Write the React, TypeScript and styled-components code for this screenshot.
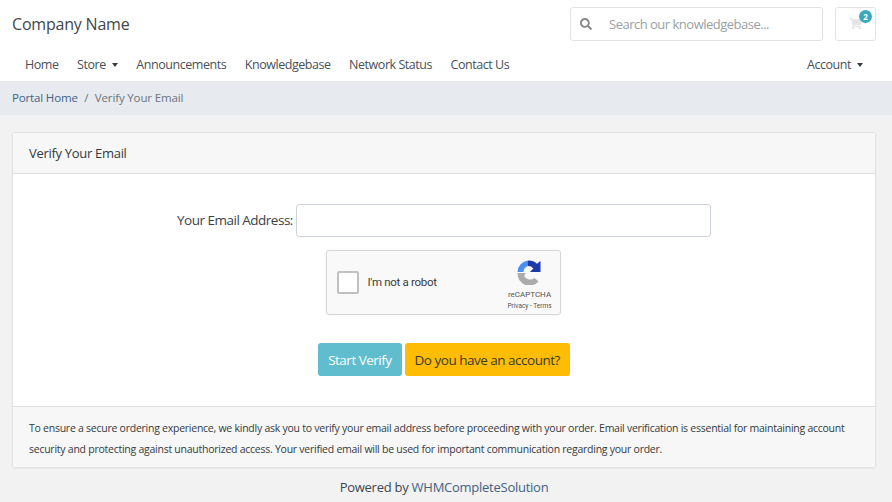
import styled, { createGlobalStyle } from 'styled-components'
import { FaSearch, FaShoppingCart } from 'react-icons/fa'

const GlobalStyle = createGlobalStyle`
  html, body {
    margin: 0;
    background: #f2f2f2;
    font-family: "Open Sans", "Liberation Sans", sans-serif;
    color: #343a40;
  }
  * {
    box-sizing: border-box;
  }
`

const Header = styled.header`
  background: #fff;
  padding: 7px 16px 0 12px;
  height: 81px;
`

const TopRow = styled.div`
  display: flex;
  align-items: center;
  height: 33px;
`

const Brand = styled.a`
  font-size: 16px;
  letter-spacing: -0.2px;
  line-height: 33px;
  padding-top: 1px;
  color: #3f464c;
  margin-right: auto;
`

const SearchBox = styled.div`
  width: 253px;
  height: 34px;
  display: flex;
  align-items: center;
  border: 1px solid #e0e3e6;
  border-radius: 3px;
  padding-left: 9px;
  color: #888;
  font-size: 13px;
  letter-spacing: -0.5px;
`

const SearchText = styled.span`
  margin-left: 17px;
  color: #9a9fa4;
`

const CartButton = styled.div`
  position: relative;
  width: 41px;
  height: 34px;
  margin-left: 12px;
  border: 1px solid #e0e3e6;
  border-radius: 3px;
  display: flex;
  align-items: center;
  justify-content: center;
  color: #e3e5e6;
  font-size: 13px;
`

const CartBadge = styled.span`
  position: absolute;
  top: 2px;
  right: 3px;
  width: 13px;
  height: 13px;
  border-radius: 50%;
  background: #3aa9bb;
  color: #fff;
  font-size: 8px;
  font-weight: 700;
  line-height: 13px;
  text-align: center;
`

const Nav = styled.nav`
  display: flex;
  align-items: center;
  height: 41px;
  gap: 18.6px;
  padding: 8px 13px 0 13px;
  font-size: 12.5px;
  letter-spacing: -0.46px;
  color: #4a5057;
`

const NavItem = styled.a<{ $right?: boolean }>`
  display: flex;
  align-items: center;
  ${(p) => p.$right && 'margin-left: auto;'}
`

const Caret = styled.span`
  margin-left: 6px;
  border-top: 4px solid #343a40;
  border-left: 3.5px solid transparent;
  border-right: 3.5px solid transparent;
`

const Breadcrumb = styled.div`
  height: 34px;
  background: #e7eaee;
  padding: 0 0 1px 12px;
  display: flex;
  align-items: center;
  font-size: 11.5px;
  letter-spacing: -0.15px;
  color: #6c757d;
`

const CrumbLink = styled.a`
  color: #3f6286;
`

const CrumbSep = styled.span`
  margin: 0 6.5px;
`

const Main = styled.main`
  padding: 17px 16px 0 12px;
`

const Card = styled.section`
  background: #fff;
  border: 1px solid #e1e1e1;
  border-radius: 3px;
  box-shadow: 0 1px 2px rgba(0, 0, 0, 0.05);
`

const CardHeader = styled.div`
  height: 41px;
  background: #f7f7f7;
  border-bottom: 1px solid #dfdfdf;
  padding-left: 16px;
  display: flex;
  align-items: center;
  font-size: 13px;
  letter-spacing: -0.3px;
  color: #343a40;
`

const CardBody = styled.div`
  height: 232px;
  padding-top: 30px;
  display: flex;
  flex-direction: column;
  align-items: center;
`

const FormRow = styled.div`
  display: flex;
  align-items: center;
  align-self: flex-start;
  padding-left: 164px;
`

const Label = styled.label`
  font-size: 13.5px;
  letter-spacing: -0.5px;
  padding-bottom: 2px;
  color: #3b4046;
  margin-right: 3px;
`

const TextInput = styled.input`
  width: 415px;
  height: 33px;
  border: 1px solid #ced4da;
  border-radius: 3px;
  background: #fff;
`

const Captcha = styled.div`
  width: 235px;
  height: 65px;
  margin-top: 13px;
  margin-left: -2px;
  background: #f9f9f9;
  border: 1px solid #d6d6d6;
  border-radius: 3px;
  box-shadow: 0 0 3px rgba(0, 0, 0, 0.06);
  display: flex;
  align-items: center;
  padding-left: 10px;
  font-family: Roboto, "Liberation Sans", sans-serif;
`

const CaptchaBox = styled.div`
  width: 22px;
  height: 23px;
  background: #fff;
  border: 2px solid #c1c1c1;
  border-radius: 2px;
`

const CaptchaLabel = styled.span`
  margin-left: 9px;
  padding-bottom: 1px;
  font-size: 11.5px;
  letter-spacing: -0.3px;
  color: #3a3a3a;
  margin-right: auto;
`

const CaptchaBrand = styled.div`
  width: 58px;
  margin-right: 1px;
  padding-top: 5px;
  display: flex;
  flex-direction: column;
  align-items: center;
  color: #555;
`

const CaptchaName = styled.span`
  font-size: 8px;
  line-height: 11px;
  margin-top: 4px;
`

const CaptchaLinks = styled.span`
  font-size: 6.5px;
  line-height: 9px;
  margin-top: 2px;
`

const Buttons = styled.div`
  display: flex;
  gap: 3px;
  margin-top: 28px;
`

const Button = styled.button<{ $variant: 'info' | 'warning' }>`
  height: 33px;
  border: none;
  border-radius: 3px;
  padding: 0 10px;
  font-family: inherit;
  font-size: 13.5px;
  letter-spacing: -0.5px;
  background: ${(p) => (p.$variant === 'info' ? '#5fbdce' : '#ffbc05')};
  color: ${(p) => (p.$variant === 'info' ? '#fff' : '#3a3a2c')};
`

const CardFooter = styled.div`
  height: 61px;
  background: #f7f7f7;
  border-top: 1px solid #dfdfdf;
  padding: 11px 16px 0;
  font-size: 10.5px;
  letter-spacing: -0.25px;
  line-height: 21px;
  color: #343a40;
`

const Footer = styled.footer`
  margin-top: 10px;
  text-align: center;
  font-size: 13px;
  letter-spacing: -0.26px;
  color: #3f464c;
`

const FooterLink = styled.a`
  color: #3f6286;
`

const RecaptchaLogo = () => (
  <svg width="25" height="25" viewBox="0 0 25 25">
    <path d="M11 0.5a12 12 0 0 1 9 3.2L23.5 1v11H13l3.4-3.6A7 7 0 0 0 11 6z" fill="#1c3aa9" />
    <path d="M11 0.5A12 12 0 0 0 0.5 12H6.5A6.5 6.5 0 0 1 11 6z" fill="#4a90f2" />
    <path d="M0.5 13a12 12 0 0 0 21 8.5l-4-3.5A7 7 0 0 1 7 16l2-3z" fill="#ababab" />
  </svg>
)

const App = () => {
  return (
    <>
      <GlobalStyle />
      <Header>
        <TopRow>
          <Brand>Company Name</Brand>
          <SearchBox>
            <FaSearch size={12} />
            <SearchText>Search our knowledgebase...</SearchText>
          </SearchBox>
          <CartButton>
            <FaShoppingCart />
            <CartBadge>2</CartBadge>
          </CartButton>
        </TopRow>
        <Nav>
          <NavItem>Home</NavItem>
          <NavItem>
            Store
            <Caret />
          </NavItem>
          <NavItem>Announcements</NavItem>
          <NavItem>Knowledgebase</NavItem>
          <NavItem>Network Status</NavItem>
          <NavItem>Contact Us</NavItem>
          <NavItem $right>
            Account
            <Caret />
          </NavItem>
        </Nav>
      </Header>
      <Breadcrumb>
        <CrumbLink>Portal Home</CrumbLink>
        <CrumbSep>/</CrumbSep>
        Verify Your Email
      </Breadcrumb>
      <Main>
        <Card>
          <CardHeader>Verify Your Email</CardHeader>
          <CardBody>
            <FormRow>
              <Label>Your Email Address:</Label>
              <TextInput type="text" />
            </FormRow>
            <Captcha>
              <CaptchaBox />
              <CaptchaLabel>I'm not a robot</CaptchaLabel>
              <CaptchaBrand>
                <RecaptchaLogo />
                <CaptchaName>reCAPTCHA</CaptchaName>
                <CaptchaLinks>Privacy - Terms</CaptchaLinks>
              </CaptchaBrand>
            </Captcha>
            <Buttons>
              <Button $variant="info">Start Verify</Button>
              <Button $variant="warning">Do you have an account?</Button>
            </Buttons>
          </CardBody>
          <CardFooter>
            To ensure a secure ordering experience, we kindly ask you to verify your email address
            before proceeding with your order. Email verification is essential for maintaining
            account security and protecting against unauthorized access. Your verified email will
            be used for important communication regarding your order.
          </CardFooter>
        </Card>
        <Footer>
          Powered by <FooterLink>WHMCompleteSolution</FooterLink>
        </Footer>
      </Main>
    </>
  )
}

export default App
